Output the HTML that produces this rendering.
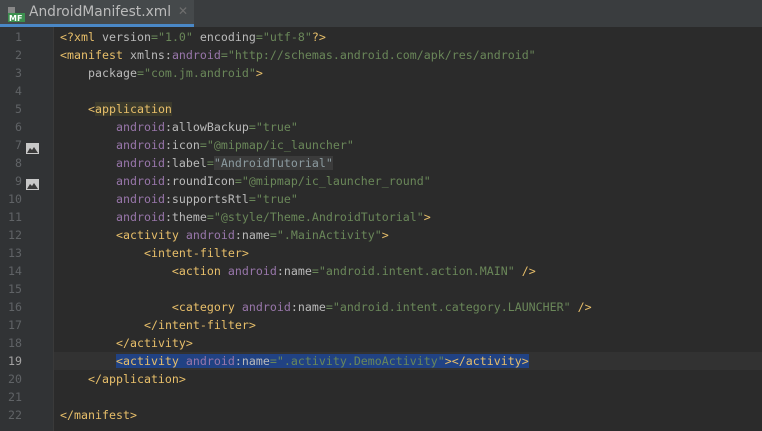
<!DOCTYPE html>
<html><head><style>
body{margin:0;width:762px;height:431px;overflow:hidden;background:#2b2b2b;font-family:"DejaVu Sans Mono","Liberation Mono",monospace;}
#bar{position:absolute;left:0;top:0;width:762px;height:27px;background:#3a3d3f;}
#tab{position:absolute;left:0;top:0;width:194px;height:24px;background:#45494b;}
#ul{position:absolute;left:0;top:24px;width:194px;height:3px;background:#4a88c7;}
#tab .t{position:absolute;left:29px;top:4px;font-family:"DejaVu Sans","Liberation Sans",sans-serif;font-size:13.8px;color:#bbbbbb;}
#tab .x{position:absolute;left:178px;top:4px;color:#6e6e6e;font-size:12px;font-family:"DejaVu Sans",sans-serif;}
#mf{position:absolute;left:8px;top:7px;width:17px;height:15px;}
#gut{position:absolute;left:0;top:27px;width:53px;height:404px;background:#313335;}
#sep{position:absolute;left:53px;top:27px;width:1px;height:404px;background:#3a3a3a;}
.ln{position:absolute;left:0;width:22px;text-align:right;color:#606366;font-size:11.6px;line-height:18px;}
.l{position:absolute;left:60px;white-space:pre;font-size:11.6px;letter-spacing:0.015px;line-height:18px;color:#a9b7c6;}
.g{color:#e8bf6a}.a{color:#bababa}.n{color:#9876aa}.v{color:#6a8759}
.cur{position:absolute;left:54px;width:708px;height:18px;top:352px;background:#323232;}
.sel{background:#214283}
.img{position:absolute;left:26px;width:13px;height:11px;}
</style></head><body>
<div id="bar"><div id="tab"><svg id="mf" viewBox="0 0 17 15"><rect x="0" y="0" width="7" height="6" fill="#888"/><rect x="0" y="6" width="17" height="9" fill="#3c8f4f"/><text x="1" y="14" font-size="8" font-family="DejaVu Sans" font-weight="bold" fill="#fff">MF</text></svg><span class="t">AndroidManifest.xml</span><span class="x">✕</span></div><div id="ul"></div></div>
<div id="gut"></div><div id="sep"></div>
<div class="cur"></div>
<div class="img" style="top:139px"><svg width="13" height="11"><rect width="13" height="11" fill="#c8c8c8"/><path d="M1 10 L4 5 L6 7 L8 4 L12 10Z" fill="#3a3a3a"/></svg></div>
<div class="img" style="top:175px"><svg width="13" height="11"><rect width="13" height="11" fill="#c8c8c8"/><path d="M1 10 L4 5 L6 7 L8 4 L12 10Z" fill="#3a3a3a"/></svg></div>
<div class="ln" style="top:28px">1</div><div class="ln" style="top:46px">2</div><div class="ln" style="top:64px">3</div><div class="ln" style="top:82px">4</div><div class="ln" style="top:100px">5</div><div class="ln" style="top:118px">6</div><div class="ln" style="top:136px">7</div><div class="ln" style="top:154px">8</div><div class="ln" style="top:172px">9</div><div class="ln" style="top:190px">10</div><div class="ln" style="top:208px">11</div><div class="ln" style="top:226px">12</div><div class="ln" style="top:244px">13</div><div class="ln" style="top:262px">14</div><div class="ln" style="top:280px">15</div><div class="ln" style="top:298px">16</div><div class="ln" style="top:316px">17</div><div class="ln" style="top:334px">18</div><div class="ln" style="top:352px;color:#a4a3a3">19</div><div class="ln" style="top:370px">20</div><div class="ln" style="top:388px">21</div><div class="ln" style="top:406px">22</div>
<div class="l" style="top:28px"><span class="g">&lt;?xml </span><span class="a">version</span><span class="v">="1.0" </span><span class="a">encoding</span><span class="v">="utf-8"</span><span class="g">?&gt;</span></div>
<div class="l" style="top:46px"><span class="g">&lt;manifest </span><span class="a">xmlns:</span><span class="n">android</span><span class="v">="http://schemas.android.com/apk/res/android"</span></div>
<div class="l" style="top:64px">    <span class="a">package</span><span class="v">="com.jm.android"</span><span class="g">&gt;</span></div>
<div class="l" style="top:100px">    <span class="g">&lt;<span style="background:#3b3a2c">application</span></span></div>
<div class="l" style="top:118px">        <span class="n">android</span><span class="a">:allowBackup</span><span class="v">="true"</span></div>
<div class="l" style="top:136px">        <span class="n">android</span><span class="a">:icon</span><span class="v">="@mipmap/ic_launcher"</span></div>
<div class="l" style="top:154px">        <span class="n">android</span><span class="a">:label</span><span class="v">=<span style="background:#3b3b3b;color:#8c9ba0">"AndroidTutorial"</span></span></div>
<div class="l" style="top:172px">        <span class="n">android</span><span class="a">:roundIcon</span><span class="v">="@mipmap/ic_launcher_round"</span></div>
<div class="l" style="top:190px">        <span class="n">android</span><span class="a">:supportsRtl</span><span class="v">="true"</span></div>
<div class="l" style="top:208px">        <span class="n">android</span><span class="a">:theme</span><span class="v">="@style/Theme.AndroidTutorial"</span><span class="g">&gt;</span></div>
<div class="l" style="top:226px">        <span class="g">&lt;activity </span><span class="n">android</span><span class="a">:name</span><span class="v">=".MainActivity"</span><span class="g">&gt;</span></div>
<div class="l" style="top:244px">            <span class="g">&lt;intent-filter&gt;</span></div>
<div class="l" style="top:262px">                <span class="g">&lt;action </span><span class="n">android</span><span class="a">:name</span><span class="v">="android.intent.action.MAIN" </span><span class="g">/&gt;</span></div>
<div class="l" style="top:298px">                <span class="g">&lt;category </span><span class="n">android</span><span class="a">:name</span><span class="v">="android.intent.category.LAUNCHER" </span><span class="g">/&gt;</span></div>
<div class="l" style="top:316px">            <span class="g">&lt;/intent-filter&gt;</span></div>
<div class="l" style="top:334px">        <span class="g">&lt;/activity&gt;</span></div>
<div class="l" style="top:352px">        <span class="sel"><span class="g">&lt;activity </span><span class="n">android</span><span class="a">:name</span><span class="v">=".activity.DemoActivity"</span><span class="g">&gt;&lt;/activity&gt;</span></span></div>
<div class="l" style="top:370px">    <span class="g">&lt;/application&gt;</span></div>
<div class="l" style="top:406px"><span class="g">&lt;/manifest&gt;</span></div>
</body></html>
